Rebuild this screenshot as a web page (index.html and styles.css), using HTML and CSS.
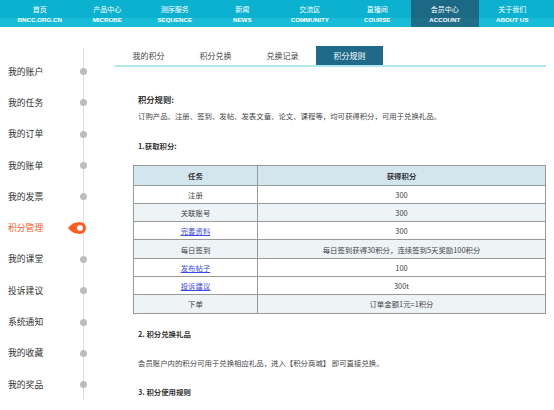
FILE: index.html
```html
<!DOCTYPE html>
<html lang="zh">
<head>
<meta charset="utf-8">
<title>积分规则</title>
<link rel="stylesheet" href="styles.css">
</head>
<body>
<header class="topnav">
  <a class="nav-item"><span class="cn">首页</span><span class="en">BNCC.ORG.CN</span></a>
  <a class="nav-item"><span class="cn">产品中心</span><span class="en">MICROBE</span></a>
  <a class="nav-item"><span class="cn">测序服务</span><span class="en">SEQUENCE</span></a>
  <a class="nav-item"><span class="cn">新闻</span><span class="en">NEWS</span></a>
  <a class="nav-item"><span class="cn">交流区</span><span class="en">COMMUNITY</span></a>
  <a class="nav-item"><span class="cn">直播间</span><span class="en">COURSE</span></a>
  <a class="nav-item active"><span class="cn">会员中心</span><span class="en">ACCOUNT</span></a>
  <a class="nav-item"><span class="cn">关于我们</span><span class="en">ABOUT US</span></a>
</header>
<div class="main">
  <aside class="sidebar">
    <div class="side-item"><span class="label">我的账户</span><span class="marker"><span class="dot"></span></span></div>
    <div class="side-item"><span class="label">我的任务</span><span class="marker"><span class="dot"></span></span></div>
    <div class="side-item"><span class="label">我的订单</span><span class="marker"><span class="dot"></span></span></div>
    <div class="side-item"><span class="label">我的账单</span><span class="marker"><span class="dot"></span></span></div>
    <div class="side-item"><span class="label">我的发票</span><span class="marker"><span class="dot"></span></span></div>
    <div class="side-item active"><span class="label">积分管理</span><span class="marker"><svg class="pin" width="20" height="14" viewBox="0 0 20 14"><path d="M1 7 C4 3.2 8 1 13 1 A6 6 0 1 1 13 13 C8 13 4 10.8 1 7 Z" fill="#ff5a1e"/><circle cx="13" cy="7" r="2.9" fill="#fff"/></svg></span></div>
    <div class="side-item"><span class="label">我的课堂</span><span class="marker"><span class="dot"></span></span></div>
    <div class="side-item"><span class="label">投诉建议</span><span class="marker"><span class="dot"></span></span></div>
    <div class="side-item"><span class="label">系统通知</span><span class="marker"><span class="dot"></span></span></div>
    <div class="side-item"><span class="label">我的收藏</span><span class="marker"><span class="dot"></span></span></div>
    <div class="side-item"><span class="label">我的奖品</span><span class="marker"><span class="dot"></span></span></div>
  </aside>
  <section class="content">
    <nav class="tabs">
      <a class="tab">我的积分</a>
      <a class="tab">积分兑换</a>
      <a class="tab">兑换记录</a>
      <a class="tab active">积分规则</a>
    </nav>
    <div class="rules">
      <h3 class="title">积分规则:</h3>
      <p class="text">订购产品、注册、签到、发帖、发表文章、论文、课程等，均可获得积分，可用于兑换礼品。</p>
      <h4 class="sub first">1.获取积分:</h4>
      <table class="points">
        <thead>
          <tr><th class="c1">任务</th><th>获得积分</th></tr>
        </thead>
        <tbody>
          <tr><td>注册</td><td>300</td></tr>
          <tr class="shade"><td>关联账号</td><td>300</td></tr>
          <tr><td><a class="lnk">完善资料</a></td><td>300</td></tr>
          <tr class="shade"><td>每日签到</td><td>每日签到获得30积分，连续签到5天奖励100积分</td></tr>
          <tr><td><a class="lnk">发布帖子</a></td><td>100</td></tr>
          <tr><td><a class="lnk">投诉建议</a></td><td>300t</td></tr>
          <tr class="shade"><td>下单</td><td>订单金额1元=1积分</td></tr>
        </tbody>
      </table>
      <h4 class="sub second">2. 积分兑换礼品</h4>
      <p class="text gap">会员账户内的积分可用于兑换相应礼品，进入【积分商城】 即可直接兑换。</p>
      <h4 class="sub third">3. 积分使用规则</h4>
    </div>
  </section>
</div>
</body>
</html>
```
FILE: styles.css
```css
* { box-sizing: border-box; }
html, body {
  margin: 0;
  padding: 0;
  background: #fff;
  font-family: "Noto Sans CJK SC", "Noto Sans", "Liberation Sans", sans-serif;
  color: #333;
  overflow: hidden;
}
a { text-decoration: none; color: inherit; }

.topnav {
  height: 27px;
  display: flex;
  padding-left: 6px;
  background: linear-gradient(#0bb1cf 0, #0bb1cf 18px, #18bcd8 18px, #18bcd8 27px);
}
.nav-item {
  width: 67.5px;
  height: 27px;
  display: flex;
  flex-direction: column;
  align-items: center;
  color: #fff;
  padding-top: 4px;
}
.nav-item.active {
  background: linear-gradient(#1c6885 0, #1c6885 18px, #1f6e8a 18px, #1f6e8a 27px);
}
.nav-item .cn {
  font-size: 7px;
  line-height: 10px;
  height: 11px;
}
.nav-item .en {
  font-family: "Liberation Sans", Arial, sans-serif;
  font-size: 6.2px;
  font-weight: bold;
  line-height: 10px;
}

.main {
  display: flex;
}
.sidebar {
  position: relative;
  width: 115px;
  flex: none;
  padding-top: 29px;
  padding-left: 8px;
}
.sidebar::before {
  content: "";
  position: absolute;
  left: 83px;
  top: 21px;
  height: 360px;
  width: 1px;
  background: #dcdcdc;
}
.side-item {
  width: 82px;
  height: 31.3px;
  display: flex;
  align-items: center;
  position: relative;
}
.side-item .label {
  font-size: 8.8px;
  color: #333;
  line-height: 12px;
}
.side-item.active .label { color: #ff5a2a; }
.side-item .marker {
  margin-left: auto;
  width: 14px;
  height: 14px;
  display: flex;
  align-items: center;
  justify-content: center;
}
.dot {
  width: 7px;
  height: 7px;
  border-radius: 50%;
  background: #bdbdbd;
}
.pin {
  display: block;
  margin-left: -12px;
  flex: none;
}

.content {
  width: 431px;
  padding-top: 19px;
}
.tabs {
  display: flex;
  border-bottom: 2px solid #b3e7f0;
}
.tab {
  width: 67px;
  height: 19px;
  display: flex;
  align-items: center;
  justify-content: center;
  font-size: 8px;
  color: #444;
}
.tab.active {
  background: #1f6a88;
  color: #fff;
}

.rules {
  padding-left: 23px;
}
.title {
  margin: 26px 0 0;
  font-size: 8.3px;
  line-height: 12px;
  font-weight: bold;
  color: #333;
}
.text {
  margin: 5px 0 0;
  font-size: 7.4px;
  line-height: 12px;
  color: #444;
}
.sub {
  margin: 0;
  font-size: 7.4px;
  line-height: 12px;
  font-weight: bold;
  color: #333;
}
.sub.first { margin-top: 18px; }
.sub.second { margin-top: 14px; }
.sub.third { margin-top: 17px; }
.text.gap { margin-top: 17px; }

.points {
  margin: 13px 0 0 -5px;
  width: 413px;
  border-collapse: collapse;
  border: 1.5px solid #8a8a8a;
  font-size: 7.4px;
  color: #444;
}
.points th, .points td {
  border: 1px solid #9a9a9a;
  text-align: center;
  padding: 0;
  font-weight: normal;
}
.points th {
  height: 19.5px;
  background: #d3e5ed;
  font-weight: bold;
  color: #333;
}
.points td { height: 18.3px; }
.points .c1 { width: 124px; }
.points tr.shade td { background: #eef3f6; }
.lnk {
  color: #3b47e6;
  text-decoration: underline;
}
```
